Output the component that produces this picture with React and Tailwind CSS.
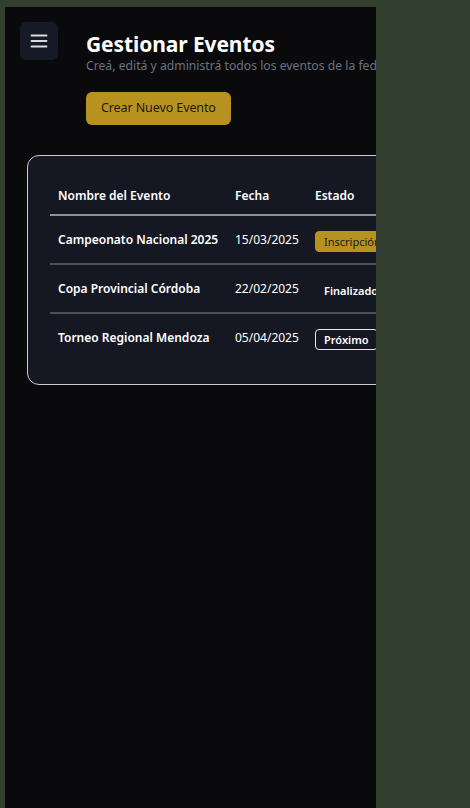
import React from 'react';

const events = [
  { name: 'Campeonato Nacional 2025', date: '15/03/2025', status: 'Inscripción Abierta', kind: 'open' },
  { name: 'Copa Provincial Córdoba', date: '22/02/2025', status: 'Finalizado', kind: 'done' },
  { name: 'Torneo Regional Mendoza', date: '05/04/2025', status: 'Próximo', kind: 'next' },
];

const StatusBadge = ({ kind, label }) => {
  if (kind === 'open') {
    return <span className="inline-block rounded-[4px] border border-[#b8921e] bg-[#b8921e] px-2 py-[2px] text-[11px] leading-[15px] text-[#1a1a1a] whitespace-nowrap">{label}</span>;
  }
  if (kind === 'next') {
    return <span className="inline-block rounded-[4px] border border-[#e5e7eb] px-2 py-[2px] text-[11px] leading-[15px] font-semibold text-white whitespace-nowrap">{label}</span>;
  }
  return <span className="inline-block rounded-[4px] border border-transparent px-2 py-[2px] text-[11px] leading-[15px] font-semibold text-white whitespace-nowrap">{label}</span>;
};

const App = () => {
  return (
    <div className="w-[470px] h-[808px] bg-[#333f2e] pt-[7px] pl-[5px]" style={{ fontFamily: '"Noto Sans", "Open Sans", sans-serif' }}>
      <div className="w-[371px] h-[801px] bg-[#0a0a0c] overflow-hidden">
        <div className="w-[600px] pt-[15px] pl-[15px]">
          {/* Header */}
          <div className="flex items-start gap-[28px]">
            <button className="w-[38px] h-[38px] rounded-[6px] bg-[#161a26] flex items-center justify-center shrink-0">
              <svg width="18" height="16" viewBox="0 0 18 16" fill="none">
                <path d="M1.5 2.5h15M1.5 8h15M1.5 13.5h15" stroke="#d9dbe0" strokeWidth="1.8" strokeLinecap="round" />
              </svg>
            </button>
            <div className="pt-[10px]">
              <h1 className="text-[21px] leading-[25px] font-bold text-white tracking-[-0.1px]">Gestionar Eventos</h1>
              <p className="text-[12.2px] leading-[17px] text-[#6b7280] whitespace-nowrap">Creá, editá y administrá todos los eventos de la federación.</p>
              <button className="mt-[18px] h-[33px] px-[15px] rounded-[6px] bg-[#b8921e] text-[12.5px] tracking-[-0.1px] text-[#1a1a1a]">Crear Nuevo Evento</button>
            </div>
          </div>

          {/* Card */}
          <div className="mt-[30px] ml-[7px] rounded-[12px] border border-[#c9ccd3] bg-[#151823] p-[22px]">
            <table className="border-collapse text-left">
              <thead>
                <tr className="border-b-2 border-[#8d9099]">
                  <th className="h-[37px] px-2 text-[12px] font-semibold text-white w-[177px]">Nombre del Evento</th>
                  <th className="h-[37px] px-2 text-[12px] font-semibold text-white w-[80px]">Fecha</th>
                  <th className="h-[37px] px-2 text-[12px] font-semibold text-white w-[150px]">Estado</th>
                  <th className="h-[37px] px-2 text-[12px] font-semibold text-white w-[100px]">Acciones</th>
                </tr>
              </thead>
              <tbody>
                {events.map((ev, i) => (
                  <tr key={ev.name} className={i < events.length - 1 ? 'border-b-2 border-[#4b4f59]' : ''}>
                    <td className="h-[49px] px-2 text-[12px] font-semibold text-white whitespace-nowrap">{ev.name}</td>
                    <td className="h-[49px] px-2 text-[12px] text-white">{ev.date}</td>
                    <td className="h-[49px] px-2"><StatusBadge kind={ev.kind} label={ev.status} /></td>
                    <td className="h-[49px] px-2 text-[12px] text-white">Editar</td>
                  </tr>
                ))}
              </tbody>
            </table>
          </div>
        </div>
      </div>
    </div>
  );
};

export default App;
